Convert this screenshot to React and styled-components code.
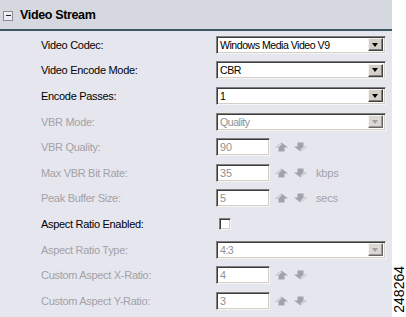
import styled, { createGlobalStyle } from 'styled-components';

const GlobalStyle = createGlobalStyle`
body {
    margin: 0;
    background: #ffffff;
    font-family: "Liberation Sans", Arial, sans-serif;
}
`

const Page = styled.div`
display: flex;
width: 406px;
height: 317px;
overflow: hidden;
`

const Panel = styled.div`
width: 393px;
background: #e6e6ee;
display: flex;
flex-direction: column;
`

const Header = styled.div`
height: 31px;
box-sizing: border-box;
background: #d5d8df;
border-bottom: 2px solid #3b5862;
display: flex;
align-items: center;
padding-left: 3px;
gap: 7px;
`

const Toggle = styled.span`
width: 10px;
height: 10px;
box-sizing: border-box;
border: 1px solid #8c8c98;
background: #eceef2;
display: flex;
align-items: center;
justify-content: center;
margin-top: 2px;

&::after {
    content: '';
    width: 5px;
    height: 1px;
    background: #202020;
}
`

const Title = styled.span`
font-weight: bold;
font-size: 12.5px;
letter-spacing: -0.35px;
color: #000;
`

const Body = styled.div`
display: flex;
flex-direction: column;
padding-top: 1px;
`

const Row = styled.div`
display: grid;
grid-template-columns: 175px auto;
align-items: center;
height: 25.6px;
padding-left: 41px;
`

const Label = styled.span`
font-size: 11px;
letter-spacing: -0.3px;
color: ${p => (p.$off ? '#a2a2a8' : '#000')};
`

const Sunken = styled.div`
box-sizing: border-box;
background: #fff;
border: 1px solid;
border-color: #7e7e7e #f4f4f4 #f4f4f4 #7e7e7e;
box-shadow: inset 1px 1px 0 #3c3c3c, inset -1px -1px 0 #d4d0c8;
`

const SelectBox = styled(Sunken)`
width: 170px;
height: 18px;
display: flex;
align-items: center;
justify-content: space-between;
padding: 0 2px 0 3px;
font-size: 10.6px;
letter-spacing: -0.5px;
color: ${p => (p.$off ? '#909090' : '#000')};
`

const ArrowButton = styled.span`
width: 15px;
height: 13px;
box-sizing: border-box;
background: #d4d0c8;
border: 1px solid;
border-color: #f4f4f4 #404040 #404040 #f4f4f4;
box-shadow: inset -1px -1px 0 #808080;
display: flex;
align-items: center;
justify-content: center;
opacity: ${p => (p.$off ? 0.8 : 1)};

&::after {
    content: '';
    border-left: 3.5px solid transparent;
    border-right: 3.5px solid transparent;
    border-top: 4px solid ${p => (p.$off ? '#8a8a8a' : '#000')};
    margin-left: -1px;
}
`

const NumberWrap = styled.div`
display: flex;
align-items: center;
`

const InputBox = styled(Sunken)`
width: 54px;
height: 18px;
display: flex;
align-items: center;
padding-left: 3px;
font-size: 10.8px;
color: #909090;
`

const Spin = styled.div`
display: flex;
align-items: center;
gap: 6px;
margin-left: 5px;
`

const Unit = styled.span`
margin-left: 9px;
font-size: 11px;
letter-spacing: -0.2px;
color: #a2a2a8;
`

const Check = styled(Sunken)`
width: 12px;
height: 12px;
margin-left: 3px;
`

const Side = styled.div`
flex: 1;
display: flex;
align-items: flex-end;
justify-content: center;
padding-bottom: 4px;
`

const FigId = styled.span`
writing-mode: vertical-rl;
transform: rotate(180deg);
font-size: 14px;
color: #000;
line-height: 1;
`

const ArrowIcon = ({ down }) => (
    <svg width="13" height="10" viewBox="0 0 13 10">
        <g transform={down ? 'rotate(180 6.5 5)' : undefined}>
            <path d="M6.5 0.5 L13 5.5 L9.5 5.5 L9.5 9.5 L3.5 9.5 L3.5 5.5 L0 5.5 Z" fill="#a2a2aa" />
            <path d="M6.5 0.5 L0 5.5 L3.5 5.5 L6.5 2.5 Z" fill="#d6d6de" />
        </g>
    </svg>
)

const Select = ({ value, off }) => (
    <SelectBox $off={off}>
        <span>{value}</span>
        <ArrowButton $off={off} />
    </SelectBox>
)

const NumberInput = ({ value, unit }) => (
    <NumberWrap>
        <InputBox>{value}</InputBox>
        <Spin>
            <ArrowIcon />
            <ArrowIcon down />
        </Spin>
        {unit && <Unit>{unit}</Unit>}
    </NumberWrap>
)

const rows = [
    { label: 'Video Codec:', kind: 'select', value: 'Windows Media Video V9' },
    { label: 'Video Encode Mode:', kind: 'select', value: 'CBR' },
    { label: 'Encode Passes:', kind: 'select', value: '1' },
    { label: 'VBR Mode:', kind: 'select', value: 'Quality', off: true },
    { label: 'VBR Quality:', kind: 'number', value: '90', off: true },
    { label: 'Max VBR Bit Rate:', kind: 'number', value: '35', unit: 'kbps', off: true },
    { label: 'Peak Buffer Size:', kind: 'number', value: '5', unit: 'secs', off: true },
    { label: 'Aspect Ratio Enabled:', kind: 'check' },
    { label: 'Aspect Ratio Type:', kind: 'select', value: '4:3', off: true },
    { label: 'Custom Aspect X-Ratio:', kind: 'number', value: '4', off: true },
    { label: 'Custom Aspect Y-Ratio:', kind: 'number', value: '3', off: true },
]

const App = () => {
    return (
        <Page>
            <GlobalStyle />
            <Panel>
                <Header>
                    <Toggle />
                    <Title>Video Stream</Title>
                </Header>
                <Body>
                    {rows.map(r => (
                        <Row key={r.label}>
                            <Label $off={r.off}>{r.label}</Label>
                            {r.kind === 'select' && <Select value={r.value} off={r.off} />}
                            {r.kind === 'number' && <NumberInput value={r.value} unit={r.unit} />}
                            {r.kind === 'check' && <Check />}
                        </Row>
                    ))}
                </Body>
            </Panel>
            <Side>
                <FigId>248264</FigId>
            </Side>
        </Page>
    );
}

export default App;
